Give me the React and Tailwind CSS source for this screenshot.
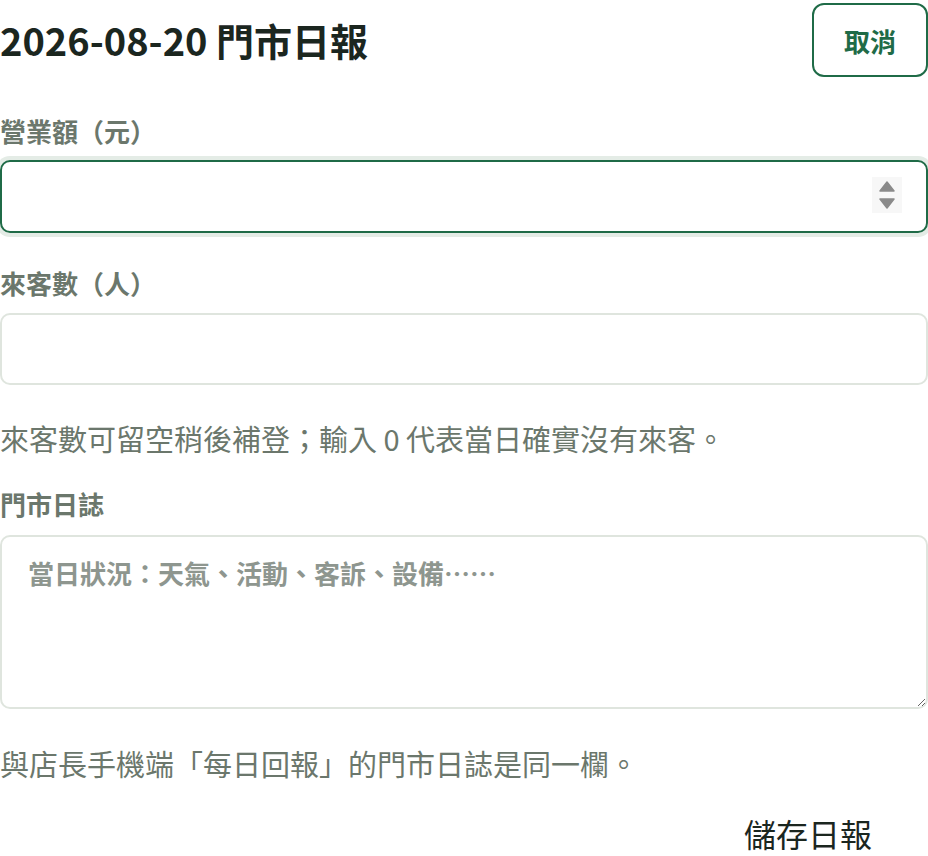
import React from 'react';

export default function App() {
    return (
        <div className="w-[928px] bg-white text-[#1b261f]" style={{ fontFamily: '"Noto Sans CJK TC", "Noto Sans", sans-serif' }}>
            {/* Header */}
            <div className="flex items-center justify-between h-[80px]">
                <h1 className="text-[38px] font-bold leading-none">2026-08-20 門市日報</h1>
                <button className="h-[74px] w-[116px] rounded-[12px] border-2 border-[#1f6b47] text-[#1f6b47] text-[26px] font-bold">
                    取消
                </button>
            </div>

            {/* 營業額 */}
            <label className="block mt-[35px] text-[26px] leading-[32px] font-bold text-[#6b776c]">營業額（元）</label>
            <div className="relative mt-[13px]">
                <input
                    type="text"
                    inputMode="numeric"
                    className="block w-full h-[73px] rounded-[10px] border-2 border-[#1f6b47] ring-4 ring-[#e4ece6] outline-none px-[24px] text-[24px]"
                />
                {/* spin buttons */}
                <div className="absolute right-[26px] top-[17px] w-[30px] h-[36px] bg-[#f7f7f7] flex flex-col items-center justify-center gap-[6px]">
                    <svg width="16" height="11" viewBox="0 0 16 11"><path d="M8 1 L15 10 H1 Z" fill="#8a8a8a" stroke="#8a8a8a" strokeWidth="1.5" strokeLinejoin="round" /></svg>
                    <svg width="16" height="11" viewBox="0 0 16 11"><path d="M1 1 H15 L8 10 Z" fill="#8a8a8a" stroke="#8a8a8a" strokeWidth="1.5" strokeLinejoin="round" /></svg>
                </div>
            </div>

            {/* 來客數 */}
            <label className="block mt-[34px] text-[26px] leading-[32px] font-bold text-[#6b776c]">來客數（人）</label>
            <input
                type="text"
                inputMode="numeric"
                className="block w-full mt-[14px] h-[72px] rounded-[10px] border-2 border-[#dfe5de] outline-none px-[24px] text-[24px]"
            />
            <p className="mt-[33px] text-[29px] leading-[40px] text-[#6b776c]">來客數可留空稍後補登；輸入 0 代表當日確實沒有來客。</p>

            {/* 門市日誌 */}
            <label className="block mt-[30px] text-[26px] leading-[32px] font-bold text-[#6b776c]">門市日誌</label>
            <textarea
                placeholder="當日狀況：天氣、活動、客訴、設備……"
                className="block w-full mt-[15px] h-[174px] rounded-[10px] border-2 border-[#dfe5de] outline-none px-[26px] pt-[16px] text-[26px] leading-[40px] font-bold placeholder:text-[#8e968f]"
            />
            <p className="mt-[34px] text-[29px] leading-[40px] text-[#6b776c]">與店長手機端「每日回報」的門市日誌是同一欄。</p>

            <div className="flex justify-end mt-[28px]">
                <button className="px-[56px] text-[32px] leading-[44px] text-[#1b261f]">儲存日報</button>
            </div>
        </div>
    );
}
